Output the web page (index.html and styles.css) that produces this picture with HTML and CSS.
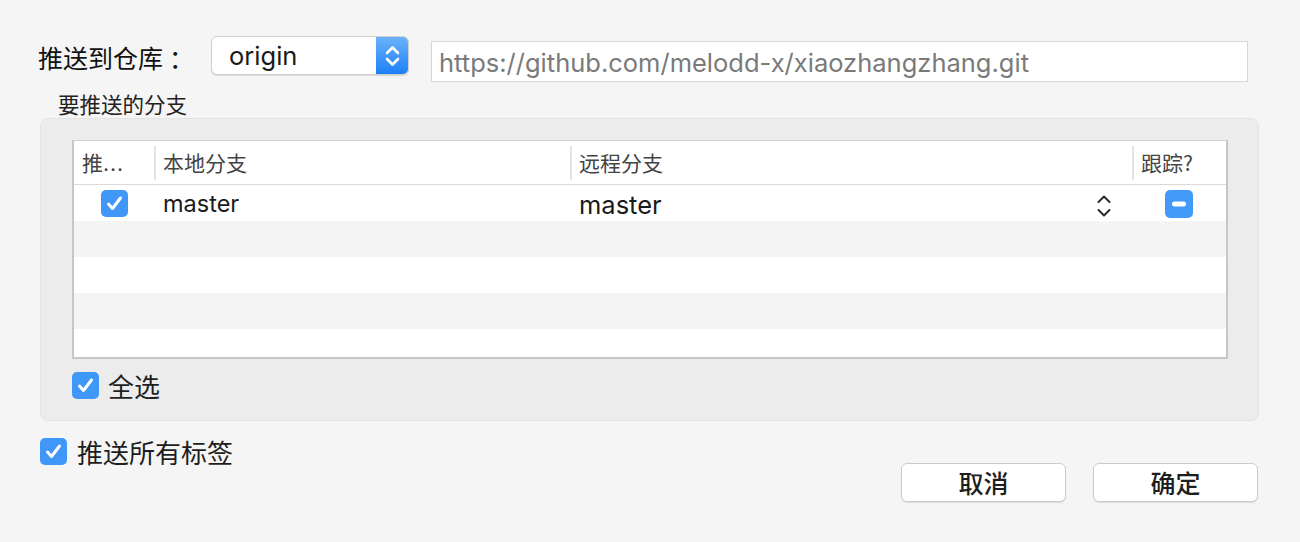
FILE: index.html
```html
<!DOCTYPE html>
<html lang="zh">
<head>
<meta charset="utf-8">
<title>推送</title>
<link rel="stylesheet" href="styles.css">
</head>
<body>
<div class="dialog">
  <div class="repo-row">
    <div class="repo-label">推送到仓库<span class="colon">：</span></div>
    <div class="popup">
      <span class="popup-text">origin</span>
      <span class="popup-arrows">
        <svg width="33" height="39" viewBox="0 0 33 39"><path d="M11 17 L16.5 11.5 L22 17" fill="none" stroke="#fff" stroke-width="2.6" stroke-linecap="round" stroke-linejoin="round"/><path d="M11 23 L16.5 28.5 L22 23" fill="none" stroke="#fff" stroke-width="2.6" stroke-linecap="round" stroke-linejoin="round"/></svg>
      </span>
    </div>
    <div class="url-field">https://github.com/melodd-x/xiaozhangzhang.git</div>
  </div>

  <div class="branch-title">要推送的分支</div>

  <div class="group">
    <div class="table">
      <div class="thead">
        <div class="th">推<span class="dots">...</span></div>
        <div class="th">本地分支</div>
        <div class="th">远程分支</div>
        <div class="th">跟踪?</div>
      </div>
      <div class="tr">
        <div class="td td-center">
          <svg class="cb" width="27" height="27" viewBox="0 0 27 27"><rect width="27" height="27" rx="5" fill="#3f97f7"/><path d="M7.5 14 L11.5 18.5 L19.5 8" fill="none" stroke="#fff" stroke-width="3" stroke-linecap="round" stroke-linejoin="round"/></svg>
        </div>
        <div class="td local">master</div>
        <div class="td remote">
          <span class="remote-text">master</span>
          <svg class="stepper" width="16" height="24" viewBox="0 0 16 24"><path d="M2.5 8 L8 2.5 L13.5 8" fill="none" stroke="#2a2a2a" stroke-width="2" stroke-linecap="round" stroke-linejoin="round"/><path d="M2.5 16 L8 21.5 L13.5 16" fill="none" stroke="#2a2a2a" stroke-width="2" stroke-linecap="round" stroke-linejoin="round"/></svg>
        </div>
        <div class="td td-center">
          <svg class="minus" width="28" height="28" viewBox="0 0 28 28"><rect width="28" height="28" rx="5" fill="#4399f7"/><rect x="7" y="11.5" width="14" height="5" rx="2.5" fill="#fff"/></svg>
        </div>
      </div>
      <div class="tr alt"></div>
      <div class="tr"></div>
      <div class="tr alt"></div>
      <div class="tr"></div>
    </div>

    <div class="check-row select-all">
      <svg class="cb" width="27" height="27" viewBox="0 0 27 27"><rect width="27" height="27" rx="5" fill="#3f97f7"/><path d="M7.5 14 L11.5 18.5 L19.5 8" fill="none" stroke="#fff" stroke-width="3" stroke-linecap="round" stroke-linejoin="round"/></svg>
      <span>全选</span>
    </div>
  </div>

  <div class="footer">
    <div class="check-row tags">
      <svg class="cb" width="27" height="27" viewBox="0 0 27 27"><rect width="27" height="27" rx="5" fill="#3f97f7"/><path d="M7.5 14 L11.5 18.5 L19.5 8" fill="none" stroke="#fff" stroke-width="3" stroke-linecap="round" stroke-linejoin="round"/></svg>
      <span>推送所有标签</span>
    </div>
    <div class="buttons">
      <button class="btn">取消</button>
      <button class="btn">确定</button>
    </div>
  </div>
</div>
</body>
</html>
```

FILE: styles.css
```css
* { box-sizing: border-box; }

html, body {
  margin: 0;
  padding: 0;
  background: #f5f5f5;
  width: 1300px;
  height: 542px;
  overflow: hidden;
}

body {
  font-family: "Inter", "Noto Sans CJK SC", sans-serif;
  color: #1e1e1e;
}

.dialog {
  padding: 36px 41px 0 40px;
}

.repo-row {
  display: flex;
  align-items: flex-start;
  margin-left: -2px;
}

.repo-label {
  font-family: "Noto Sans CJK SC", sans-serif;
  font-size: 25px;
  line-height: 42px;
  white-space: nowrap;
  color: #111;
}

.colon {
  margin-left: 6px;
}

.popup {
  margin-left: 17px;
  width: 198px;
  height: 39px;
  display: flex;
  background: #fff;
  border: 1px solid #cfcfcf;
  border-radius: 6px;
  box-shadow: 0 1px 1px rgba(0, 0, 0, 0.12);
  overflow: hidden;
}

.popup-text {
  flex: 1;
  padding-left: 17px;
  font-size: 25.5px;
  line-height: 37px;
  color: #1a1a1a;
}

.popup-arrows {
  width: 33px;
  height: 39px;
  margin-top: -1px;
  margin-right: -1px;
  background: linear-gradient(#6db3fb, #1b7ef6);
  display: flex;
}

.url-field {
  flex: 1;
  margin-left: 22px;
  margin-right: 11px;
  margin-top: 5px;
  height: 41px;
  background: #fff;
  border: 1px solid #d6d6d6;
  padding-left: 7px;
  font-size: 25.5px;
  line-height: 41px;
  color: #7a7a7a;
  white-space: nowrap;
  overflow: hidden;
}

.branch-title {
  font-family: "Noto Sans CJK SC", sans-serif;
  margin-top: 9px;
  padding-left: 18px;
  font-size: 21.5px;
  line-height: 25px;
  color: #222;
}

.group {
  margin-top: 2px;
  background: #ececec;
  border: 1px solid #e3e3e3;
  border-radius: 8px;
  padding: 21px 30px 21px 31px;
}

.table {
  height: 219px;
  background: #fff;
  border: 2px solid #c6c6c6;
  border-top: 1px solid #d2d2d2;
  overflow: hidden;
}

.thead, .tr {
  display: grid;
  grid-template-columns: 80px 416px 562px 1fr;
}

.thead {
  height: 44px;
  align-items: center;
  border-bottom: 1px solid #dadada;
}

.th {
  height: 34px;
  line-height: 32px;
  padding-left: 8px;
  font-family: "Noto Sans CJK SC", sans-serif;
  font-size: 21px;
  color: #444;
  white-space: nowrap;
  overflow: hidden;
}

.dots {
  font-family: "Inter", sans-serif;
  letter-spacing: 1px;
}

.th + .th {
  border-left: 2px solid #e2e2e2;
  padding-left: 7px;
}

.tr {
  height: 36px;
  background: #fff;
  align-items: center;
}

.tr.alt {
  background: #f4f4f4;
}

.td {
  height: 36px;
  display: flex;
  align-items: center;
}

.td-center {
  justify-content: center;
}

.local {
  padding-left: 9px;
  padding-top: 1px;
  font-size: 23.5px;
  color: #1a1a1a;
}

.remote {
  padding-left: 9px;
  padding-right: 20px;
  justify-content: space-between;
  font-size: 25.5px;
  color: #1a1a1a;
}

.remote-text {
  margin-top: 3px;
}

.stepper {
  margin-top: 6px;
}

.minus {
  margin-top: 2px;
}

.check-row {
  display: flex;
  align-items: center;
  font-family: "Noto Sans CJK SC", sans-serif;
  font-size: 26px;
  line-height: 27px;
  color: #1e1e1e;
}

.cb {
  flex: none;
  display: block;
}

.select-all {
  margin-top: 13px;
  gap: 9px;
}

.footer {
  display: flex;
  justify-content: space-between;
  align-items: flex-start;
  margin-top: 17px;
}

.tags {
  gap: 10px;
}

.buttons {
  display: flex;
  gap: 27px;
  margin-top: 25px;
  margin-right: 1px;
}

.btn {
  width: 165px;
  height: 39px;
  background: #fff;
  border: 1px solid #cbcbcb;
  border-radius: 6px;
  box-shadow: 0 1px 1px rgba(0, 0, 0, 0.1);
  font-family: "Noto Sans CJK SC", sans-serif;
  font-size: 25px;
  font-weight: 500;
  color: #1e1e1e;
  padding: 0;
  line-height: 37px;
}
```
